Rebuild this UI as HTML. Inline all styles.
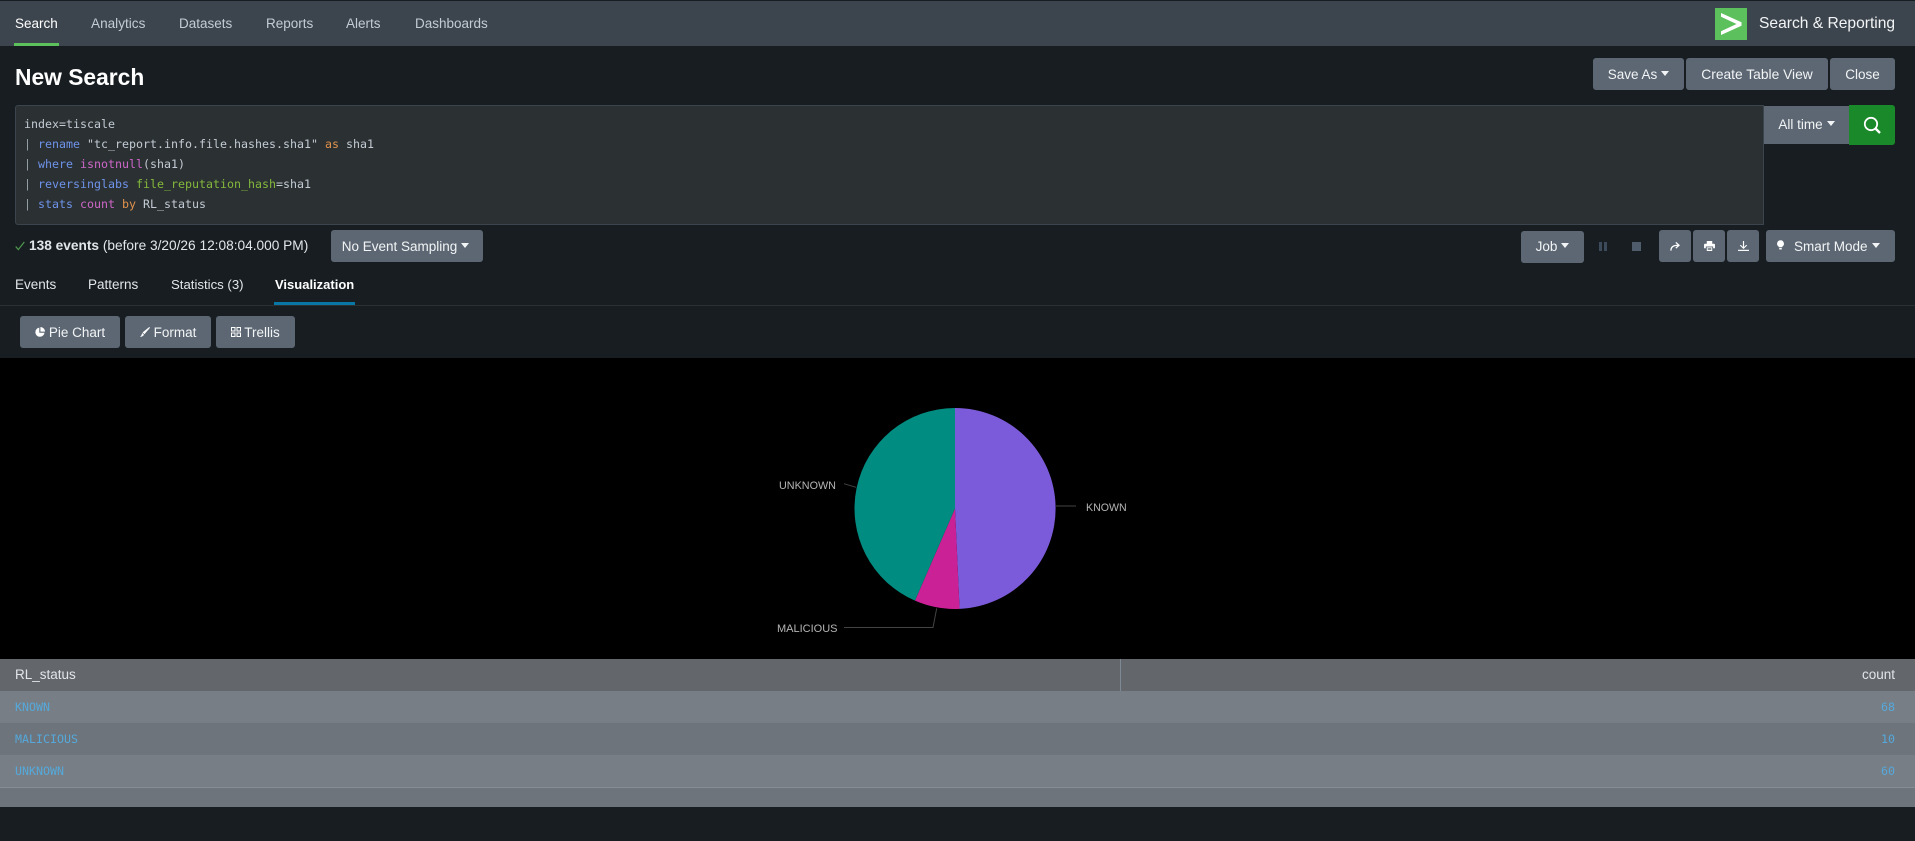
<!DOCTYPE html>
<html lang="en">
<head>
<meta charset="utf-8">
<title>New Search</title>
<style>
html,body{margin:0;padding:0;background:#171d21;}
body{position:relative;width:1915px;height:841px;overflow:hidden;font-family:"Liberation Sans",sans-serif;font-size:14px;color:#e1e6eb;}
.a{position:absolute;white-space:nowrap;}
.t{position:absolute;white-space:nowrap;line-height:20px;height:20px;}
.b{position:absolute;background:#5c6773;border-radius:3px;color:#f2f4f5;display:flex;align-items:center;justify-content:center;height:32px;white-space:nowrap;}
.c{display:inline-block;width:0;height:0;border-left:4px solid transparent;border-right:4px solid transparent;border-top:5px solid #f2f4f5;margin-left:4px;position:relative;top:-1px;}
.m{position:absolute;white-space:pre;font-family:"DejaVu Sans Mono",monospace;font-size:11.63px;line-height:20px;height:20px;}
.k{color:#6e93ea}.p{color:#ce67c8}.o{color:#e0924c}.g{color:#83b83c}.d{color:#98a1aa}
svg{display:block}
</style>
</head>
<body>
<!-- nav -->
<div class="a" style="left:0;top:0;width:1915px;height:46px;background:#3c444d;border-top:1px solid #171d21;box-sizing:border-box;"></div>
<div class="t" style="left:15px;top:14px;color:#fff;font-size:13.5px;">Search</div>
<div class="a" style="left:14px;top:43px;width:45px;height:3px;background:#5cc05c;"></div>
<div class="t" style="left:91px;top:14px;color:#c3cbd4;font-size:13.6px;">Analytics</div>
<div class="t" style="left:179px;top:14px;color:#c3cbd4;font-size:13.5px;">Datasets</div>
<div class="t" style="left:266px;top:14px;color:#c3cbd4;font-size:13.5px;">Reports</div>
<div class="t" style="left:346px;top:14px;color:#c3cbd4;font-size:13.5px;">Alerts</div>
<div class="t" style="left:415px;top:14px;color:#c3cbd4;font-size:13.5px;">Dashboards</div>
<div class="a" style="left:1715px;top:8px;width:32px;height:32px;background:#5cc05c;">
<svg width="32" height="32" viewBox="0 0 32 32"><path d="M6 5 L26.5 14.3 V17.7 L6 27 V23.2 L21.5 16 L6 8.8 Z" fill="#fff"/></svg>
</div>
<div class="t" style="left:1759px;top:14px;color:#f2f4f5;font-size:15.6px;">Search &amp; Reporting</div>

<!-- title -->
<div class="a" style="left:15px;top:62px;font-size:22.8px;line-height:30px;font-weight:bold;color:#fff;">New Search</div>
<div class="b" style="left:1593px;top:58px;width:91px;font-size:13.5px;">Save As<span class="c"></span></div>
<div class="b" style="left:1686px;top:58px;width:142px;font-size:13.8px;">Create Table View</div>
<div class="b" style="left:1830px;top:58px;width:65px;font-size:13.5px;">Close</div>

<!-- search box -->
<div class="a" style="left:15px;top:105px;width:1749px;height:120px;box-sizing:border-box;background:#2b3033;border:1px solid #3c444d;border-radius:3px 0 0 3px;"></div>
<div class="m" style="left:24px;top:114px;color:#c3cbd4;">index=tiscale</div>
<div class="m" style="left:24px;top:134px;color:#c3cbd4;"><span class="d">|</span> <span class="k">rename</span> "tc_report.info.file.hashes.sha1" <span class="o">as</span> sha1</div>
<div class="m" style="left:24px;top:154px;color:#c3cbd4;"><span class="d">|</span> <span class="k">where</span> <span class="p">isnotnull</span>(sha1)</div>
<div class="m" style="left:24px;top:174px;color:#c3cbd4;"><span class="d">|</span> <span class="k">reversinglabs</span> <span class="g">file_reputation_hash</span>=sha1</div>
<div class="m" style="left:24px;top:194px;color:#c3cbd4;"><span class="d">|</span> <span class="k">stats</span> <span class="p">count</span> <span class="o">by</span> RL_status</div>
<div class="b" style="left:1764px;top:106px;width:85px;height:38px;border-radius:0;font-size:13.5px;padding-bottom:2px;box-sizing:border-box;">All time<span class="c"></span></div>
<div class="a" style="left:1849px;top:105px;width:46px;height:40px;background:#1a8929;border-radius:0 3px 3px 0;">
<svg width="46" height="40" viewBox="0 0 46 40"><circle cx="22" cy="19" r="6.2" fill="none" stroke="#fff" stroke-width="1.8"/><path d="M26.5 23.5 L31 28" stroke="#fff" stroke-width="2.4" fill="none"/></svg>
</div>

<!-- status -->
<div class="a" style="left:15px;top:241px;">
<svg width="10" height="10" viewBox="0 0 10 10"><path d="M0.7 5.5 L3.3 8.6 L9.3 1" fill="none" stroke="#4f9a4f" stroke-width="1.2"/></svg>
</div>
<div class="t" style="left:29px;top:236px;font-size:13.7px;color:#e1e6eb;"><b>138 events</b> (before 3/20/26 12:08:04.000 PM)</div>
<div class="b" style="left:331px;top:230px;width:152px;font-size:13.5px;padding-right:3px;box-sizing:border-box;">No Event Sampling<span class="c"></span></div>

<div class="b" style="left:1521px;top:231px;width:63px;font-size:13.5px;padding-bottom:1px;box-sizing:border-box;">Job<span class="c"></span></div>
<div class="a" style="left:1599px;top:242px;"><svg width="8" height="9" viewBox="0 0 8 9"><rect x="0" y="0" width="3" height="9" fill="#3c4b5c"/><rect x="5" y="0" width="3" height="9" fill="#3c4b5c"/></svg></div>
<div class="a" style="left:1632px;top:242px;width:9px;height:9px;background:#4f5c6b;"></div>
<div class="b" style="left:1659px;top:230px;width:32px;"><svg width="10" height="9" viewBox="0 0 12 11"><path d="M1 10.5 C1 6 4 4 10 4" fill="none" stroke="#fff" stroke-width="1.6"/><path d="M7 0.5 L11 4 L7 7.5" fill="none" stroke="#fff" stroke-width="1.5"/></svg></div>
<div class="b" style="left:1693px;top:230px;width:32px;"><svg width="11" height="10" viewBox="0 0 12 11"><path d="M3 0 H9 V3 H11 Q12 3 12 4 V8 H10 V6 H2 V8 H0 V4 Q0 3 1 3 H3 Z" fill="#fff"/><path d="M3 7 H9 V11 H3 Z" fill="#fff"/><rect x="4" y="8" width="4" height="1.6" fill="#5c6773"/></svg></div>
<div class="b" style="left:1727px;top:230px;width:32px;"><svg width="11" height="10" viewBox="0 0 12 11"><path d="M6 0 V7.5" stroke="#fff" stroke-width="1.3" fill="none"/><path d="M2.5 4.5 L6 8 L9.5 4.5" stroke="#fff" stroke-width="1.2" fill="none"/><path d="M0 10.3 H12" stroke="#fff" stroke-width="1.3"/></svg></div>
<div class="b" style="left:1766px;top:230px;width:129px;justify-content:flex-start;font-size:13.5px;">
<svg style="margin:0 0 2px 11px" width="7" height="10" viewBox="0 0 8 11"><path d="M4 0 A4 4 0 0 1 6 7.4 V8 H2 V7.4 A4 4 0 0 1 4 0 Z" fill="#fff"/><rect x="2.5" y="9" width="3" height="1.6" fill="#fff"/></svg>
<span style="margin-left:10px;">Smart Mode</span><span class="c"></span></div>

<!-- tabs -->
<div class="t" style="left:15px;top:275px;font-size:13.5px;color:#e1e6eb;">Events</div>
<div class="t" style="left:88px;top:275px;font-size:13.5px;color:#e1e6eb;">Patterns</div>
<div class="t" style="left:171px;top:275px;font-size:13.2px;color:#e1e6eb;">Statistics (3)</div>
<div class="t" style="left:275px;top:275px;font-size:13px;color:#fff;font-weight:bold;">Visualization</div>
<div class="a" style="left:0;top:305px;width:1915px;height:1px;background:#2b3033;"></div>
<div class="a" style="left:274px;top:302px;width:81px;height:3px;background:#0877a6;"></div>

<!-- viz buttons -->
<div class="b" style="left:20px;top:316px;width:100px;font-size:13.5px;"><svg style="margin-right:4px" width="10" height="10" viewBox="0 0 10 10"><path d="M4.3 0.6 A4.6 4.6 0 1 0 9.5 5.7 H4.3 Z" fill="#fff"/><path d="M5.4 0 A4.6 4.6 0 0 1 10 4.6 H5.4 Z" fill="#fff"/></svg>Pie Chart</div>
<div class="b" style="left:125px;top:316px;width:86px;font-size:13.5px;"><svg style="margin-right:4px" width="10" height="10" viewBox="0 0 10 10"><path d="M9.3 0 L10 0.8 L4.4 7.2 L2.6 5.4 Z" fill="#fff"/><path d="M2.2 6 L4 7.8 Q3 9.8 0 10 Q1.6 8.6 2.2 6 Z" fill="#fff"/></svg>Format</div>
<div class="b" style="left:216px;top:316px;width:79px;font-size:13.5px;"><svg style="margin-right:3px" width="10" height="10" viewBox="0 0 10 10"><g fill="none" stroke="#fff" stroke-width="1"><rect x=".5" y=".5" width="3.5" height="3.5"/><rect x="6" y=".5" width="3.5" height="3.5"/><rect x=".5" y="6" width="3.5" height="3.5"/><rect x="6" y="6" width="3.5" height="3.5"/></g></svg>Trellis</div>

<!-- chart -->
<div class="a" style="left:0;top:358px;width:1915px;height:301px;background:#000;"></div>
<svg class="a" style="left:0;top:358px;" width="1915" height="301" viewBox="0 358 1915 301">
<path d="M955 508.5 L955 408 A100.5 100.5 0 0 1 959.58 608.9 Z" fill="#7c5bda"/>
<path d="M955 508.5 L959.58 608.9 A100.5 100.5 0 0 1 914.96 600.68 Z" fill="#cb2196"/>
<path d="M955 508.5 L914.96 600.68 A100.5 100.5 0 0 1 955 408 Z" fill="#008c80"/>
<path d="M1056 506 H1076" stroke="#444" stroke-width="1" fill="none"/>
<path d="M844 483.7 L856 487.3" stroke="#444" stroke-width="1" fill="none"/>
<path d="M936.7 608.3 L933 627.5 H844" stroke="#444" stroke-width="1" fill="none"/>
<text x="1086" y="511" font-family="Liberation Sans, sans-serif" font-size="10.6" fill="#b5b5b5">KNOWN</text>
<text x="779" y="489" font-family="Liberation Sans, sans-serif" font-size="10.8" fill="#b5b5b5">UNKNOWN</text>
<text x="777" y="632" font-family="Liberation Sans, sans-serif" font-size="11" fill="#b5b5b5">MALICIOUS</text>
</svg>

<!-- table -->
<div class="a" style="left:0;top:659px;width:1915px;height:32px;background:#63666a;"></div>
<div class="a" style="left:1120px;top:659px;width:1px;height:32px;background:#7d8a94;"></div>
<div class="a" style="left:0;top:691px;width:1915px;height:32px;background:#777e85;"></div>
<div class="a" style="left:0;top:723px;width:1915px;height:32px;background:#6d747b;"></div>
<div class="a" style="left:0;top:755px;width:1915px;height:32px;background:#777e85;"></div>
<div class="a" style="left:0;top:787px;width:1915px;height:1px;background:#868c93;"></div>
<div class="a" style="left:0;top:788px;width:1915px;height:19px;background:#6d747b;"></div>
<div class="t" style="left:15px;top:665px;font-size:13.5px;color:#e1e6eb;">RL_status</div>
<div class="t" style="right:20px;top:665px;font-size:13.5px;color:#e1e6eb;">count</div>
<div class="m" style="left:15px;top:697px;color:#55a9dc;">KNOWN</div>
<div class="m" style="left:15px;top:729px;color:#55a9dc;">MALICIOUS</div>
<div class="m" style="left:15px;top:761px;color:#55a9dc;">UNKNOWN</div>
<div class="m" style="right:20px;top:697px;color:#55a9dc;">68</div>
<div class="m" style="right:20px;top:729px;color:#55a9dc;">10</div>
<div class="m" style="right:20px;top:761px;color:#55a9dc;">60</div>
</body>
</html>
